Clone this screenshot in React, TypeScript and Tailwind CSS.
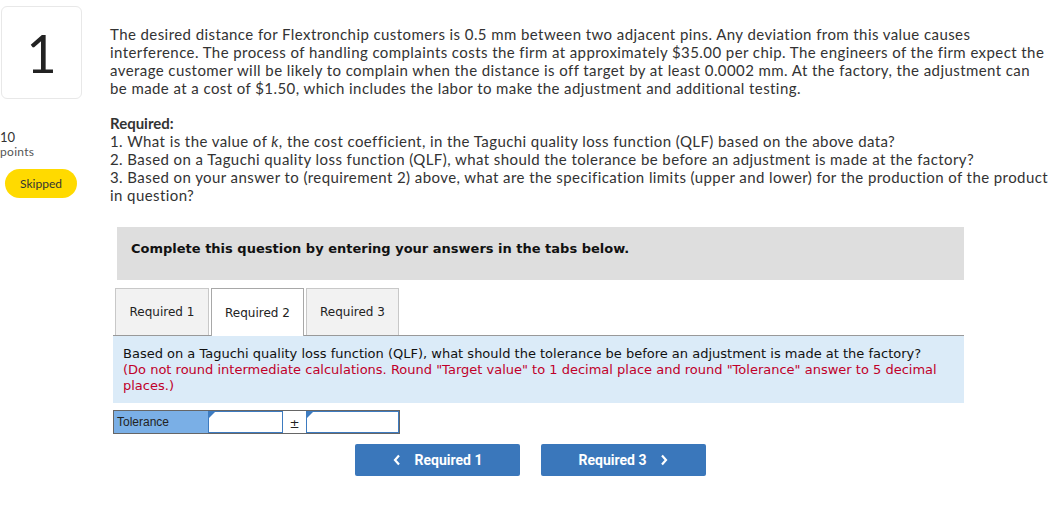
import React from "react";

const Flag = () => (
  <svg className="absolute left-0 top-0" width="6" height="6" viewBox="0 0 6 6">
    <polygon points="0,0 6,0 0,6" fill="#3d7bc0" />
  </svg>
);

export default function App() {
  const main = { fontFamily: "Lato, 'Open Sans', sans-serif" };
  const verd = { fontFamily: "'DejaVu Sans', Verdana, sans-serif" };
  return (
    <div className="w-[1060px] h-[515px] bg-white relative overflow-hidden text-[#333]" style={main}>
      <div className="flex">
        {/* left column */}
        <div className="w-[110px] shrink-0 pt-[6px]">
          <div className="ml-[1px] w-[81px] h-[93px] border border-[#e8e8e8] rounded-[6px] flex items-center justify-center text-[52px] text-[#222] leading-none">
            1
          </div>
          <div className="mt-[30px] text-[13px] leading-[16px] text-[#333]">10</div>
          <div className="text-[12px] leading-[14px] text-[#555] tracking-[0.3px]">points</div>
          <div className="mt-[10px] ml-[5px] w-[72px] h-[29px] rounded-full bg-[#ffda00] flex items-center justify-center text-[12px] text-[#333]">
            Skipped
          </div>
        </div>
        {/* main */}
        <div className="pt-[25px]">
          <p className="text-[15px] leading-[18px] text-[#333] w-[937px] tracking-[0.42px]">
            The desired distance for Flextronchip customers is 0.5 mm between two adjacent pins. Any deviation from this value causes interference. The process of handling complaints costs the firm at approximately $35.00 per chip. The engineers of the firm expect the average customer will be likely to complain when the distance is off target by at least 0.0002 mm. At the factory, the adjustment can be made at a cost of $1.50, which includes the labor to make the adjustment and additional testing.
          </p>
          <div className="mt-[17px] text-[15px] leading-[18px] text-[#333] w-[949px] tracking-[0.42px]">
            <div className="font-bold tracking-normal">Required:</div>
            <div>1. What is the value of <i>k</i>, the cost coefficient, in the Taguchi quality loss function (QLF) based on the above data?</div>
            <div>2. Based on a Taguchi quality loss function (QLF), what should the tolerance be before an adjustment is made at the factory?</div>
            <div>3. Based on your answer to (requirement 2) above, what are the specification limits (upper and lower) for the production of the product in question?</div>
          </div>

          <div className="ml-[7px] mt-[23px] w-[847px] h-[53px] bg-[#dedede] flex items-start pt-[14px] pl-[14px]" style={verd}>
            <span className="text-[13px] leading-[16px] font-bold text-[#111]">Complete this question by entering your answers in the tabs below.</span>
          </div>

          <div className="ml-[3px] mt-[8px] w-[851px]" style={verd}>
            <div className="flex items-end gap-[2px] pl-[2px] border-b border-[#999] h-[48px]">
              <div className="w-[94px] h-[47px] border border-b-0 border-[#c8c8c8] bg-[#f2f2f2] flex items-center justify-center text-[12px] text-[#222]">Required 1</div>
              <div className="w-[93px] h-[48px] -mb-px border border-b-0 border-[#a8a8a8] bg-white flex items-center justify-center text-[12px] text-[#222]">Required 2</div>
              <div className="w-[93px] h-[47px] border border-b-0 border-[#c8c8c8] bg-[#f2f2f2] flex items-center justify-center text-[12px] text-[#222]">Required 3</div>
            </div>
            <div className="bg-[#dbebf8] h-[67px] px-[10px] pt-[10px] text-[13px] leading-[16px]">
              <div className="text-[#111]">Based on a Taguchi quality loss function (QLF), what should the tolerance be before an adjustment is made at the factory?</div>
              <div className="text-[#c0002a]">(Do not round intermediate calculations. Round "Target value" to 1 decimal place and round "Tolerance" answer to 5 decimal places.)</div>
            </div>
            <div className="mt-[7px] flex w-[287px] h-[24px] border border-[#666]">
              <div className="w-[94px] bg-[#7aafe6] flex items-center pl-[3px] text-[12px] text-[#222]" style={{ fontFamily: "'Liberation Sans', Arial, sans-serif" }}>Tolerance</div>
              <div className="relative w-[75px] border border-[#3d7bc0] bg-white"><Flag /></div>
              <div className="w-[23px] flex items-center justify-center text-[12px] pt-[3px] text-[#222] bg-white">±</div>
              <div className="relative flex-1 border border-[#3d7bc0] bg-white"><Flag /></div>
            </div>
            <div className="mt-[10px] flex gap-[21px] pl-[242px]" style={{ fontFamily: "Roboto, sans-serif" }}>
              <div className="w-[165px] h-[32px] rounded-[2px] bg-[#3a77bb] text-white text-[14px] font-bold flex items-center justify-center gap-[14px]">
                <svg width="8" height="12" viewBox="0 0 8 12"><path d="M6 1.5 L2 6 L6 10.5" stroke="white" strokeWidth="2.2" fill="none" /></svg>
                <span>Required 1</span>
              </div>
              <div className="w-[165px] h-[32px] rounded-[2px] bg-[#3a77bb] text-white text-[14px] font-bold flex items-center justify-center gap-[14px]">
                <span>Required 3</span>
                <svg width="8" height="12" viewBox="0 0 8 12"><path d="M2 1.5 L6 6 L2 10.5" stroke="white" strokeWidth="2.2" fill="none" /></svg>
              </div>
            </div>
          </div>
        </div>
      </div>
    </div>
  );
}
